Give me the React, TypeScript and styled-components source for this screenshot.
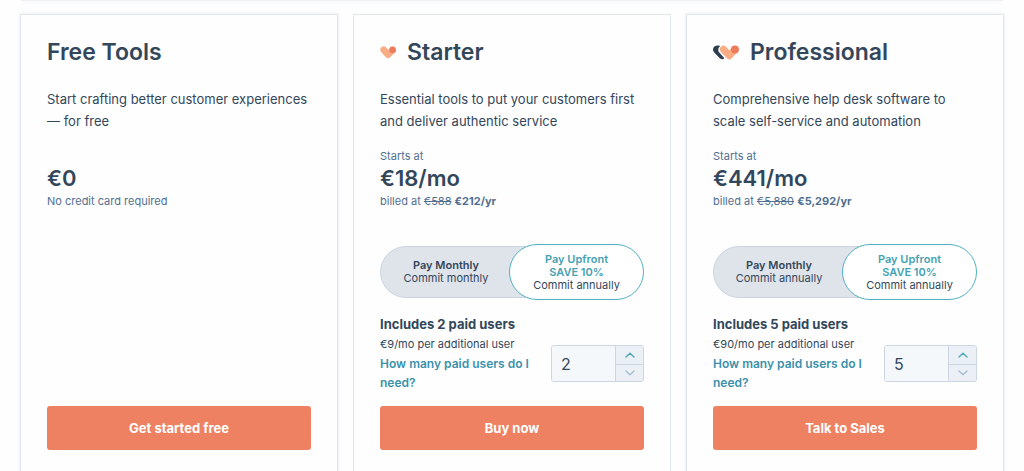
import React, { useState } from 'react';
import styled, { createGlobalStyle } from 'styled-components';

const GlobalStyle = createGlobalStyle`
  *, *::before, *::after { box-sizing: border-box; }
  body {
    margin: 0;
    background: #fefefe;
    color: #33475b;
    font-family: Inter, "Open Sans", "Liberation Sans", sans-serif;
  }
  h2, h3, p, fieldset { margin: 0; padding: 0; border: 0; }
  button, input { font-family: inherit; }
`;

const Page = styled.main`
  display: flex;
  flex-direction: column;
  gap: 13px;
`;

const HeaderEdge = styled.div`
  height: 1px;
  margin: 0 21px;
  background: #f1f2f6;
  box-shadow: 0 0 4px #dfe3eb;
`;

const Plans = styled.div`
  display: grid;
  grid-template-columns: repeat(3, minmax(0, 1fr));
  gap: 15px;
  padding: 0 20px;
`;

const Card = styled.section<{ $raised?: boolean }>`
  display: flex;
  flex-direction: column;
  padding: 22px 26px 40px;
  background: #fefefe;
  border: 1px solid #e1e5ed;
  box-shadow: ${p => (p.$raised ? '0 0 4px #e6eaf0' : 'none')};
`;

const Title = styled.h2`
  display: flex;
  align-items: center;
  gap: 11px;
  font-size: 23px;
  line-height: 30px;
  font-weight: 600;
`;

const Description = styled.p`
  margin-top: 21px;
  font-size: 13px;
  line-height: 22px;
`;

const PriceBlock = styled.div`
  margin-top: 16px;
  color: #516f90;
  font-size: 11px;
`;

const PriceLabel = styled.p`
  min-height: 16px;
  line-height: 16px;
`;

const Price = styled.p`
  color: #33475b;
  font-size: 22px;
  line-height: 28px;
  font-weight: 600;
`;

const Billing = styled.p`
  line-height: 18px;
  strong { font-weight: 700; }
`;

const Toggle = styled.fieldset`
  display: grid;
  grid-template-columns: 1fr 1fr;
  align-items: center;
  min-width: 0;
  margin-top: 34px;
`;

const overlap = (side: 'left' | 'right', active: boolean) => {
  const inner = side === 'left' ? 'right' : 'left';
  return active
    ? `margin-${inner}: -3px;`
    : `margin-${inner}: -60px; padding-${inner}: 60px;`;
};

const Option = styled.label<{ $side: 'left' | 'right'; $active: boolean }>`
  position: relative;
  z-index: ${p => (p.$active ? 1 : 0)};
  display: flex;
  flex-direction: column;
  align-items: center;
  justify-content: center;
  height: ${p => (p.$active ? 56 : 52)}px;
  ${p => overlap(p.$side, p.$active)}
  font-size: 11px;
  line-height: 13px;
  cursor: pointer;
  background: ${p => (p.$active ? '#fff' : '#dfe3ea')};
  border: 1px solid ${p => (p.$active ? '#4fb0c0' : '#cbd6e2')};
  border-radius: 28px;
  strong {
    font-weight: 600;
    color: ${p => (p.$active ? '#45a2b3' : '#33475b')};
  }
  input { position: absolute; opacity: 0; }
`;

const Seats = styled.div`
  margin-top: 13px;
`;

const SeatsTitle = styled.h3`
  font-size: 13px;
  line-height: 22px;
  font-weight: 700;
`;

const SeatsRow = styled.div`
  display: flex;
  align-items: flex-end;
  justify-content: space-between;
  gap: 16px;
`;

const SeatsText = styled.div`
  font-size: 11px;
  line-height: 19px;
`;

const HelpLink = styled.a`
  display: block;
  color: #3b91ac;
  font-size: 12px;
  font-weight: 600;
  text-decoration: none;
`;

const Stepper = styled.div`
  display: flex;
  flex: none;
  height: 37px;
  margin-bottom: 10px;
  background: #f5f8fa;
  border: 1px solid #cbd6e2;
  border-radius: 3px;
  overflow: hidden;
`;

const StepperInput = styled.input`
  width: 63px;
  padding: 0 0 0 9px;
  border: 0;
  background: #f5f8fa;
  color: #33475b;
  font-size: 16px;
  appearance: textfield;
  &::-webkit-inner-spin-button { appearance: none; margin: 0; }
`;

const StepperButtons = styled.div`
  display: grid;
  grid-template-rows: 1fr 1fr;
  width: 28px;
  border-left: 1px solid #cbd6e2;
`;

const StepButton = styled.button`
  display: flex;
  align-items: center;
  justify-content: center;
  padding: 0;
  border: 0;
  background: #eaf0f5;
  color: #4fa9b9;
  & + & { border-top: 1px solid #cbd6e2; }
  &:disabled { color: #a9bccd; }
`;

const Action = styled.button`
  width: 100%;
  height: 44px;
  margin-top: auto;
  border: 0;
  border-radius: 3px;
  background: #ee8162;
  color: #fff;
  font-size: 13px;
  font-weight: 700;
  cursor: pointer;
`;

const Spacer = styled.div`
  flex: 0 0 14px;
`;

const StarterIcon = () => (
  <svg width="16" height="13" viewBox="0 0 16 13" aria-hidden="true">
    <path d="M3.600 3.800 8.100 8.800 12.400 4.200" fill="none" stroke="#f8ad84" strokeWidth="6.600" strokeLinecap="round" strokeLinejoin="round" />
    <circle cx="12.600" cy="3.900" r="3.300" fill="#ee7c5c" />
  </svg>
);

const ProfessionalIcon = () => (
  <svg width="26" height="15" viewBox="0 0 26 15" aria-hidden="true">
    <path d="M7.200 1C3.800-.2 0 1.200 0 4.300c0 1.500.6 2.500 1.500 3.400l5 5.400c1.600 1.700 4.200 1.300 4.700-.2L6.700 8.100C4.700 6 4.700 3.200 7.200 1Z" fill="#2d3e50" />
    <path d="M10.200 4.300 16.300 10.600 22 4.500" fill="none" stroke="#fefefe" strokeWidth="8.400" strokeLinecap="round" strokeLinejoin="round" />
    <path d="M10.400 4.300 16.300 10.600 22 4.500" fill="none" stroke="#f8ad84" strokeWidth="7.200" strokeLinecap="round" strokeLinejoin="round" />
    <circle cx="21.900" cy="4.400" r="4" fill="#ee7c5c" />
  </svg>
);

const Chevron = ({ up }: { up?: boolean }) => (
  <svg width="10" height="6" viewBox="0 0 10 6" aria-hidden="true">
    <path d={up ? 'M1 5 5 1.200 9 5' : 'M1 1 5 4.800 9 1'} fill="none" stroke="currentColor" strokeWidth="1.400" strokeLinecap="round" strokeLinejoin="round" />
  </svg>
);

interface PaidPlan {
  id: string;
  name: string;
  icon: React.ReactNode;
  description: string;
  price: string;
  oldTotal: string;
  total: string;
  monthlyTerm: string;
  users: number;
  userPrice: string;
  action: string;
}

const paidPlans: PaidPlan[] = [
  {
    id: 'starter',
    name: 'Starter',
    icon: <StarterIcon />,
    description: 'Essential tools to put your customers first and deliver authentic service',
    price: '€18/mo',
    oldTotal: '€588',
    total: '€212/yr',
    monthlyTerm: 'Commit monthly',
    users: 2,
    userPrice: '€9/mo per additional user',
    action: 'Buy now',
  },
  {
    id: 'professional',
    name: 'Professional',
    icon: <ProfessionalIcon />,
    description: 'Comprehensive help desk software to scale self-service and automation',
    price: '€441/mo',
    oldTotal: '€5,880',
    total: '€5,292/yr',
    monthlyTerm: 'Commit annually',
    users: 5,
    userPrice: '€90/mo per additional user',
    action: 'Talk to Sales',
  },
];

const PaidCard = ({ plan, raised }: { plan: PaidPlan; raised: boolean }) => {
  const [upfront, setUpfront] = useState(true);
  const [users, setUsers] = useState(plan.users);
  return (
    <Card $raised={raised}>
      <Title>{plan.icon}{plan.name}</Title>
      <Description>{plan.description}</Description>
      <PriceBlock>
        <PriceLabel>Starts at</PriceLabel>
        <Price>{plan.price}</Price>
        <Billing>billed at <s>{plan.oldTotal}</s> <strong>{plan.total}</strong></Billing>
      </PriceBlock>
      <Toggle aria-label="Payment schedule">
        <Option $side="left" $active={!upfront}>
          <input type="radio" name={plan.id} checked={!upfront} onChange={() => setUpfront(false)} />
          <strong>Pay Monthly</strong>
          <span>{plan.monthlyTerm}</span>
        </Option>
        <Option $side="right" $active={upfront}>
          <input type="radio" name={plan.id} checked={upfront} onChange={() => setUpfront(true)} />
          <strong>Pay Upfront</strong>
          <strong>SAVE 10%</strong>
          <span>Commit annually</span>
        </Option>
      </Toggle>
      <Seats>
        <SeatsTitle>Includes {plan.users} paid users</SeatsTitle>
        <SeatsRow>
          <SeatsText>
            <p>{plan.userPrice}</p>
            <HelpLink href="#users">How many paid users do I need?</HelpLink>
          </SeatsText>
          <Stepper>
            <StepperInput
              type="number"
              aria-label="Paid users"
              min={plan.users}
              value={users}
              onChange={e => setUsers(Number(e.target.value))}
            />
            <StepperButtons>
              <StepButton type="button" aria-label="Add a user" onClick={() => setUsers(users + 1)}><Chevron up /></StepButton>
              <StepButton type="button" aria-label="Remove a user" disabled={users <= plan.users} onClick={() => setUsers(users - 1)}><Chevron /></StepButton>
            </StepperButtons>
          </Stepper>
        </SeatsRow>
      </Seats>
      <Spacer />
      <Action type="button">{plan.action}</Action>
    </Card>
  );
};

export default function App() {
  return (
    <>
      <GlobalStyle />
      <Page>
        <HeaderEdge />
        <Plans>
          <Card $raised>
            <Title>Free Tools</Title>
            <Description>Start crafting better customer experiences — for free</Description>
            <PriceBlock>
              <PriceLabel />
              <Price>€0</Price>
              <Billing>No credit card required</Billing>
            </PriceBlock>
            <Spacer />
            <Action type="button">Get started free</Action>
          </Card>
          {paidPlans.map(plan => (
            <PaidCard key={plan.id} plan={plan} raised={plan.id === 'professional'} />
          ))}
        </Plans>
      </Page>
    </>
  );
}
